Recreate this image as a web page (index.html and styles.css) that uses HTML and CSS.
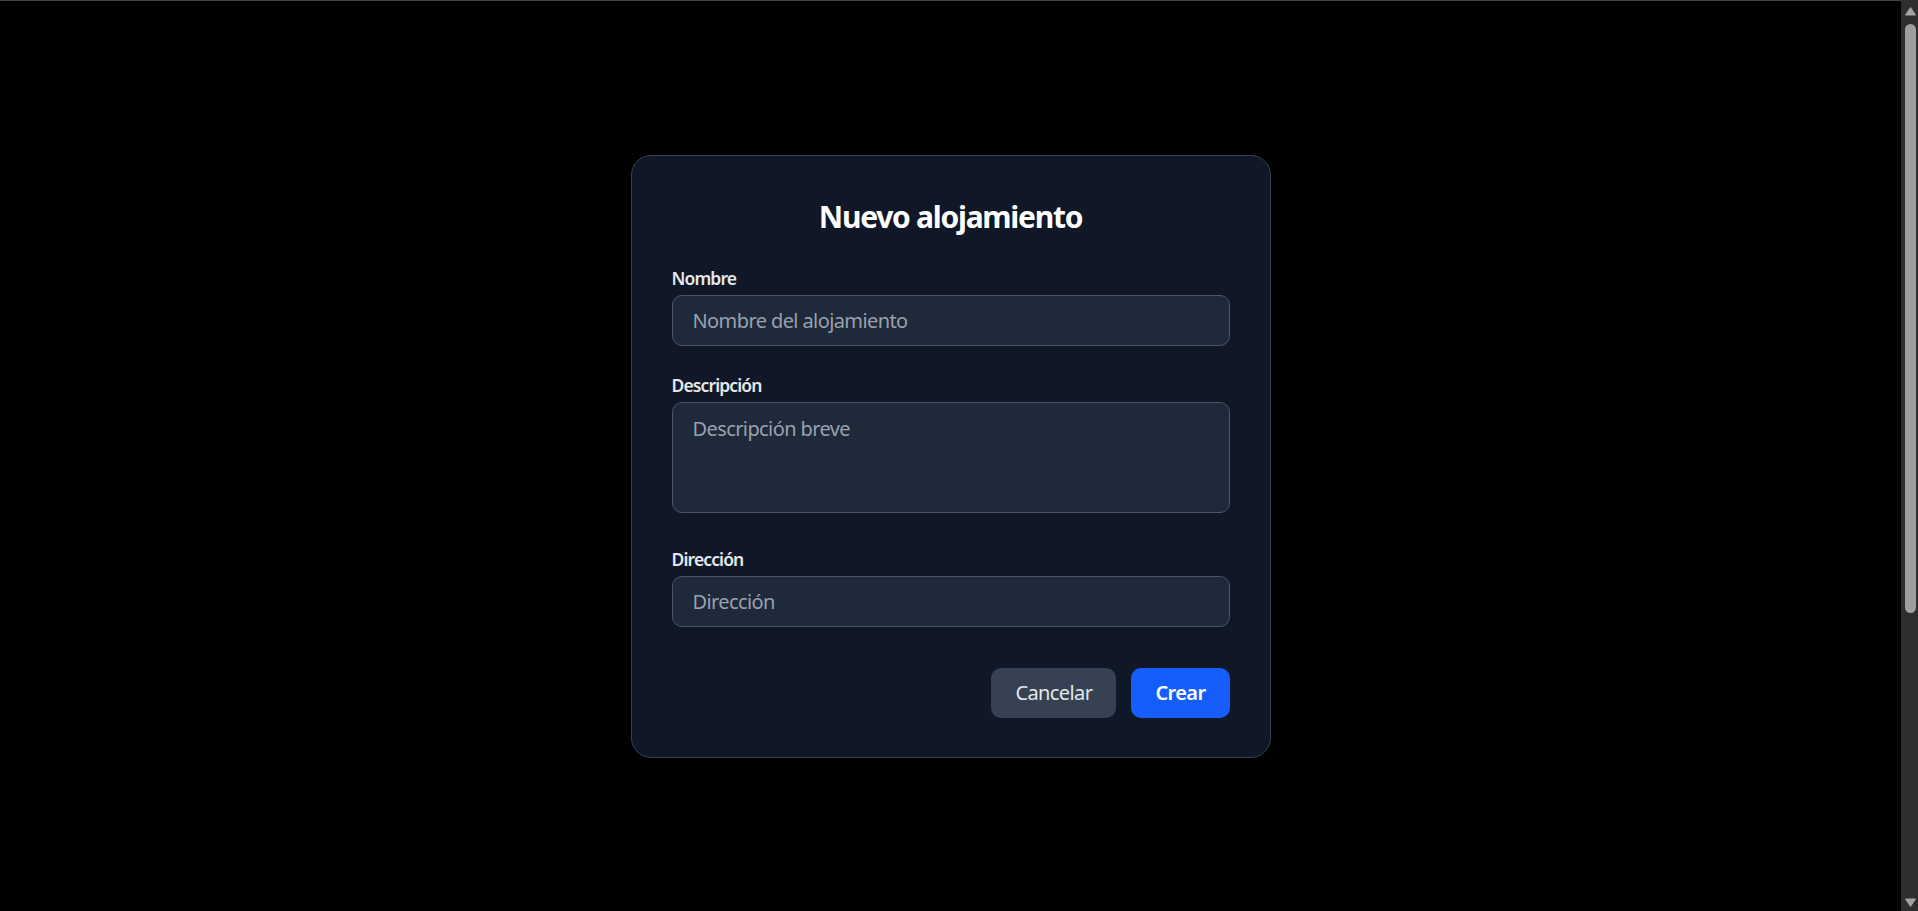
FILE: index.html
```html
<!DOCTYPE html>
<html lang="es">
<head>
<meta charset="utf-8">
<title>Nuevo alojamiento</title>
<link rel="stylesheet" href="styles.css">
</head>
<body>
<div class="viewport">
  <div class="stage">
    <form class="modal">
      <h2 class="title">Nuevo alojamiento</h2>
      <div class="field">
        <label class="label" for="nombre">Nombre</label>
        <input class="input" id="nombre" type="text" placeholder="Nombre del alojamiento">
      </div>
      <div class="field field-desc">
        <label class="label" for="descripcion">Descripción</label>
        <textarea class="input textarea" id="descripcion" placeholder="Descripción breve"></textarea>
      </div>
      <div class="field field-dir">
        <label class="label" for="direccion">Dirección</label>
        <input class="input" id="direccion" type="text" placeholder="Dirección">
      </div>
      <div class="actions">
        <button type="button" class="btn btn-cancel">Cancelar</button>
        <button type="submit" class="btn btn-primary">Crear</button>
      </div>
    </form>
  </div>
</div>
<div class="scrollbar">
  <div class="sb-button">
    <svg class="sb-arrow" viewBox="0 0 17 17" width="17" height="17"><path d="M9.5 7.5 L14.5 15 L4.5 15 Z" fill="#a3a3a3" stroke="#a3a3a3" stroke-width="1" stroke-linejoin="round"/></svg>
  </div>
  <div class="sb-track">
    <div class="sb-thumb"></div>
  </div>
  <div class="sb-button">
    <svg class="sb-arrow" viewBox="0 0 17 17" width="17" height="17"><path d="M4.5 5 L14.5 5 L9.5 12.5 Z" fill="#a3a3a3" stroke="#a3a3a3" stroke-width="1" stroke-linejoin="round"/></svg>
  </div>
</div>
</body>
</html>
```
FILE: styles.css
```css
html, body {
  margin: 0;
  height: 100%;
  background: #000;
}

body {
  display: flex;
  overflow: hidden;
}

.viewport {
  flex: 1;
  display: flex;
  flex-direction: column;
  border-top: 1px solid #3c4642;
}

.stage {
  flex: 1;
  display: flex;
  align-items: center;
  justify-content: center;
}

/* window scrollbar */
.scrollbar {
  width: 17px;
  flex: none;
  display: flex;
  flex-direction: column;
  background: #2e2e2e;
}
.sb-button {
  height: 17px;
  flex: none;
}
.sb-arrow {
  display: block;
}
.sb-track {
  flex: 1;
  padding-top: 7px;
}
.sb-thumb {
  width: 11px;
  height: 589px;
  margin-left: 4px;
  border-radius: 6px;
  background: #9f9f9f;
}

/* modal */
.modal {
  width: 640px;
  box-sizing: border-box;
  background: #101828;
  border: 1px solid #364153;
  border-radius: 20px;
  padding: 40px 40px 39px;
  font-family: "Noto Sans", "Open Sans", sans-serif;
  letter-spacing: -0.03em;
}

.title {
  margin: 0 0 30px;
  padding-top: 1px;
  font-size: 30px;
  line-height: 39px;
  font-weight: 700;
  letter-spacing: -0.042em;
  text-align: center;
  color: #ffffff;
}

.field {
  display: flex;
  flex-direction: column;
}
.field-desc {
  margin-top: 27px;
}
.field-dir {
  margin-top: 34px;
}

.label {
  font-size: 17.5px;
  line-height: 25px;
  font-weight: 600;
  letter-spacing: -0.05em;
  color: #e5e7eb;
  margin-bottom: 4px;
}

.input {
  box-sizing: border-box;
  height: 51px;
  margin: 0;
  padding: 0 20px;
  background: #1e2939;
  border: 1px solid #4a5565;
  border-radius: 10px;
  font-family: inherit;
  font-size: 20px;
  letter-spacing: -0.03em;
  color: #ffffff;
  outline: none;
}
.input::placeholder {
  color: #99a1af;
}
.textarea {
  display: block;
  height: 111px;
  padding: 11px 20px 9px;
  line-height: 30px;
  resize: none;
}

.actions {
  display: flex;
  justify-content: flex-end;
  gap: 15px;
  margin-top: 41px;
}

.btn {
  height: 50px;
  padding: 0 24px;
  border: 0;
  border-radius: 10px;
  font-family: inherit;
  font-size: 20px;
  letter-spacing: -0.03em;
  cursor: pointer;
}
.btn-cancel {
  background: #364153;
  color: #e5e7eb;
}
.btn-primary {
  background: #155dfc;
  color: #ffffff;
  font-weight: 600;
}
```
